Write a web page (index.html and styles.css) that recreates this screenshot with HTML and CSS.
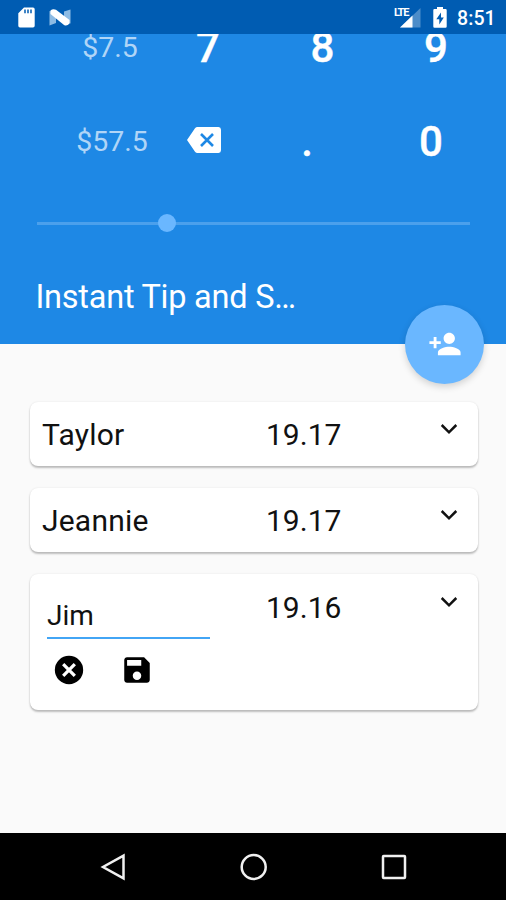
FILE: index.html
```html
<!DOCTYPE html>
<html lang="en">
<head>
<meta charset="utf-8">
<title>Instant Tip and Split</title>
<link rel="stylesheet" href="styles.css">
</head>
<body>
<div class="screen">
  <div class="status">
    <svg class="sd" width="17" height="21" viewBox="0 0 17 21"><path d="M6 .5h9a1.700 1.700 0 0 1 1.700 1.700v16.600a1.700 1.700 0 0 1-1.700 1.700H2a1.700 1.700 0 0 1-1.700-1.700V6.200z" fill="#fff"/><path d="M7 2.500v3.800M10 2.500v3.800M13 2.500v3.800" stroke="#005cb2" stroke-width="1.500"/></svg>
    <svg class="nougat" width="22" height="17" viewBox="0 0 22 17"><path d="M.5 2 7 3v11L.5 16.500zM21.500.5v14L15 13V2.500z" fill="#8dbbe4"/><path d="M1.500 1.500Q4-.7 7 .8L20.500 11v3.500Q18 17.500 15 16L1.500 5z" fill="#fff"/></svg>
    <div class="network">
      <span class="lte">LTE</span>
      <svg width="22" height="20" viewBox="0 0 22 20"><path d="M21.500 0v19.500H1z" fill="#4d8dc9"/><path d="M13.500 7.600v11.900H1z" fill="#fff"/></svg>
    </div>
    <svg class="battery" width="14" height="21" viewBox="0 0 14 21"><path d="M4 0h6v2h2.500a1.200 1.200 0 0 1 1.200 1.200v16.300a1.200 1.200 0 0 1-1.200 1.200h-11A1.200 1.200 0 0 1 .3 19.500V3.200A1.200 1.200 0 0 1 1.500 2H4z" fill="#fff"/><path d="M8 5.500 3.300 12.300h3V17.500L10.800 10.500H8z" fill="#005cb2"/></svg>
    <span class="clock">8:51</span>
  </div>

  <header class="header">
    <div class="keys keys-upper"><span class="amount">$7.5</span><b>7</b><b>8</b><b>9</b></div>
    <div class="keys keys-lower">
      <span class="amount">$57.5</span>
      <svg class="backspace" width="34" height="26" viewBox="0 0 34 26"><path d="M10.500 0H31.500A2.700 2.700 0 0 1 34 2.700v20.600A2.700 2.700 0 0 1 31.500 26H10.500Q9 26 8 24.800L0 13 8 1.200Q9 0 10.500 0z" fill="#fff"/><path d="m14 7 12 12m0-12L14 19" stroke="#1e88e5" stroke-width="2.600"/></svg>
      <b>.</b><b>0</b>
    </div>
    <div class="slider"><div class="track"></div><div class="thumb"></div></div>
    <h1 class="title">Instant Tip and S…</h1>
    <button class="fab" aria-label="Add person"><svg width="34" height="34" viewBox="0 0 24 24"><path d="M15 12c2.210 0 4-1.790 4-4s-1.790-4-4-4-4 1.790-4 4 1.790 4 4 4zm-9-2V7H4v3H1v2h3v3h2v-3h3v-2H6zm9 4c-2.670 0-8 1.340-8 4v2h16v-2c0-2.660-5.330-4-8-4z" fill="#fff"/></svg></button>
  </header>

  <main class="people">
    <section class="card">
      <span class="name">Taylor</span><span class="share">19.17</span>
      <svg class="chevron" width="18" height="12" viewBox="0 0 18 12"><path d="m1.700 2 7.300 7.300L16.300 2" fill="none" stroke="#111" stroke-width="2.500"/></svg>
    </section>
    <section class="card">
      <span class="name">Jeannie</span><span class="share">19.17</span>
      <svg class="chevron" width="18" height="12" viewBox="0 0 18 12"><path d="m1.700 2 7.300 7.300L16.300 2" fill="none" stroke="#111" stroke-width="2.500"/></svg>
    </section>
    <section class="card card-open">
      <div class="editor">
        <div class="field">Jim</div>
        <div class="actions">
          <svg width="34" height="34" viewBox="0 0 24 24"><circle cx="12" cy="12" r="10"/><path d="m7.900 7.900 8.200 8.200m0-8.200-8.200 8.200" stroke="#fff" stroke-width="2.300"/></svg>
          <svg width="34" height="34" viewBox="0 0 24 24"><path d="M17 3H5c-1.110 0-2 .9-2 2v14c0 1.100.89 2 2 2h14c1.100 0 2-.9 2-2V7l-4-4zm-5 16c-1.660 0-3-1.340-3-3s1.340-3 3-3 3 1.340 3 3-1.340 3-3 3zm3-10H5V5h10v4z"/></svg>
        </div>
      </div>
      <span class="share">19.16</span>
      <svg class="chevron" width="18" height="12" viewBox="0 0 18 12"><path d="m1.700 2 7.300 7.300L16.300 2" fill="none" stroke="#111" stroke-width="2.500"/></svg>
    </section>
  </main>

  <nav class="navbar">
    <svg width="28" height="28" viewBox="0 0 28 28"><path d="M24.500 2.600v22.800L4 14z"/></svg>
    <svg width="28" height="28" viewBox="0 0 28 28"><circle cx="13.700" cy="14" r="12"/></svg>
    <svg width="28" height="28" viewBox="0 0 28 28"><rect x="3" y="3" width="22" height="22" rx=".7"/></svg>
  </nav>
</div>
</body>
</html>
```
FILE: styles.css
```css
* { box-sizing: border-box; }
body { margin: 0; font-family: Roboto, sans-serif; }
svg { display: block; flex: none; }

.screen {
  position: relative;
  display: flex;
  flex-direction: column;
  height: 900px;
  overflow: hidden;
  background: #fafafa;
}

.status {
  position: absolute;
  inset: 0 0 auto;
  z-index: 2;
  display: flex;
  align-items: center;
  height: 34px;
  padding: 1px 11px 0 18px;
  background: #005cb2;
  color: #fff;
}
.nougat { margin-left: 14px; }
.network { position: relative; margin-left: auto; }
.lte {
  position: absolute;
  left: -5px;
  top: 0;
  font-size: 11px;
  line-height: 9px;
  font-weight: 700;
  letter-spacing: -1.2px;
}
.battery { margin-left: 12px; }
.clock {
  width: 38px;
  margin: 1px 0 0 10px;
  font-size: 19.500px;
  font-weight: 500;
  letter-spacing: .1px;
  white-space: nowrap;
}

.header {
  position: relative;
  flex: none;
  height: 343.500px;
  background: #1e88e5;
  color: #fff;
}
.keys {
  display: grid;
  align-items: center;
  justify-items: center;
  height: 94.500px;
  font-size: 42px;
}
.keys b { font-weight: 500; -webkit-text-stroke: .4px #fff; }
.keys-upper { grid-template-columns: 60px 100px 96px 133px 94px; }
.keys-upper .amount { grid-column: 1 / 3; margin-left: 60px; }
.keys-lower { grid-template-columns: 64px 96px 88px 118px 130px; }
.keys-lower .amount { grid-column: 1 / 3; margin-left: 64px; }
.amount { font-size: 28.500px; color: #b0d5f7; }
.backspace { margin-bottom: 4px; }

.slider {
  position: relative;
  display: flex;
  align-items: center;
  height: 68px;
  padding: 0 36px 0 37px;
}
.track { width: 100%; height: 3px; background: #4ba0ec; }
.thumb {
  position: absolute;
  left: 158px;
  width: 18px;
  height: 18px;
  border-radius: 50%;
  background: #6ab7ff;
}
.title {
  margin: 21px 0 0 35.500px;
  font-size: 32.500px;
  line-height: 38px;
  font-weight: 400;
  letter-spacing: -0.240px;
}
.fab {
  position: absolute;
  right: 22px;
  bottom: -40px;
  display: grid;
  place-items: center;
  width: 79px;
  height: 79px;
  padding: 0;
  border: 0;
  border-radius: 50%;
  background: #6ab7ff;
  box-shadow: 0 3px 7px rgba(0, 0, 0, .16);
}

.people {
  flex: 1;
  display: flex;
  flex-direction: column;
  gap: 22px;
  padding: 58.500px 28px 0 30px;
}
.card {
  display: grid;
  grid-template-columns: 224px 1fr 18px;
  align-items: start;
  height: 64px;
  padding: 15px 20px 0 12px;
  border-radius: 8px;
  background: #fff;
  box-shadow: 0 2px 2px rgba(0, 0, 0, .24), 0 0 2px rgba(0, 0, 0, .1);
  font-size: 30px;
  line-height: 36px;
  color: #111;
}
.name { letter-spacing: .2px; }
.card-open { height: 136px; }
.card-open .share { margin-top: 1px; }
.chevron { margin-top: 6px; }
.card-open .chevron { margin-top: 7px; }
.editor { width: 163px; margin: 9px 0 0 5px; }
.field {
  height: 41px;
  border-bottom: 2px solid #42a5f5;
  font-size: 28px;
}
.actions { display: flex; gap: 34px; margin: 14px 0 0 5px; }

.navbar {
  display: flex;
  justify-content: space-between;
  align-items: center;
  height: 67px;
  padding: 0 98px 0 99px;
  background: #000;
}
.navbar svg { fill: none; stroke: #f0f0f0; stroke-width: 2.500; }
```
